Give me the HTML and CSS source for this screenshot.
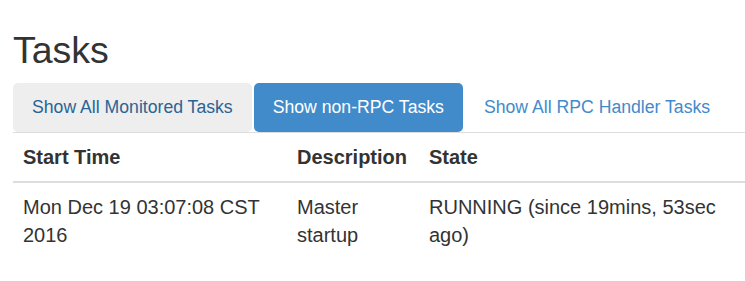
FILE: index.html
```html
<!DOCTYPE html>
<html>

<head>
  <meta charset="utf-8">
  <title>Tasks</title>
  <link rel="stylesheet" href="styles.css">
</head>

<body>
  <div class="container">
    <h1>Tasks</h1>
    <ul class="nav-pills">
      <li class="pill hover"><a href="#">Show All Monitored Tasks</a></li>
      <li class="pill active"><a href="#">Show non-RPC Tasks</a></li>
      <li class="pill"><a href="#">Show All RPC Handler Tasks</a></li>
    </ul>
    <table class="tasks">
      <thead>
        <tr>
          <th class="col-time">Start Time</th>
          <th class="col-desc">Description</th>
          <th>State</th>
        </tr>
      </thead>
      <tbody>
        <tr>
          <td>Mon Dec 19 03:07:08 CST 2016</td>
          <td>Master startup</td>
          <td>RUNNING (since 19mins, 53sec ago)</td>
        </tr>
      </tbody>
    </table>
  </div>
</body>

</html>
```

FILE: styles.css
```css
* {
  box-sizing: border-box;
}

html,
body {
  margin: 0;
  padding: 0;
  background-color: #fff;
  overflow: hidden;
}

body {
  font-family: "Liberation Sans", Arial, sans-serif;
  font-size: 20px;
  line-height: 28px;
  color: #333;
}

.container {
  padding-left: 13px;
}

h1 {
  font-size: 37.5px;
  font-weight: normal;
  line-height: 1.1;
  margin: 30px 0 12px 0;
}

.nav-pills {
  display: flex;
  gap: 2px;
  list-style: none;
  margin: 0;
  padding: 0;
  border-bottom: 1px solid #ddd;
}

.pill a {
  display: block;
  padding: 14px 19px;
  font-size: 17.65px;
  line-height: 21px;
  border-radius: 5px;
  color: #428bca;
  text-decoration: none;
}

.pill.hover a {
  background-color: #eee;
  color: #2a6496;
}

.pill.active a {
  background-color: #428bca;
  color: #fff;
}

.tasks {
  width: 100%;
  table-layout: fixed;
  border-collapse: collapse;
}

.tasks th,
.tasks td {
  text-align: left;
  vertical-align: top;
  padding: 10px;
}

.tasks th {
  font-weight: bold;
  border-bottom: 2px solid #ddd;
}

.col-time {
  width: 274px;
}

.col-desc {
  width: 132px;
}
```
